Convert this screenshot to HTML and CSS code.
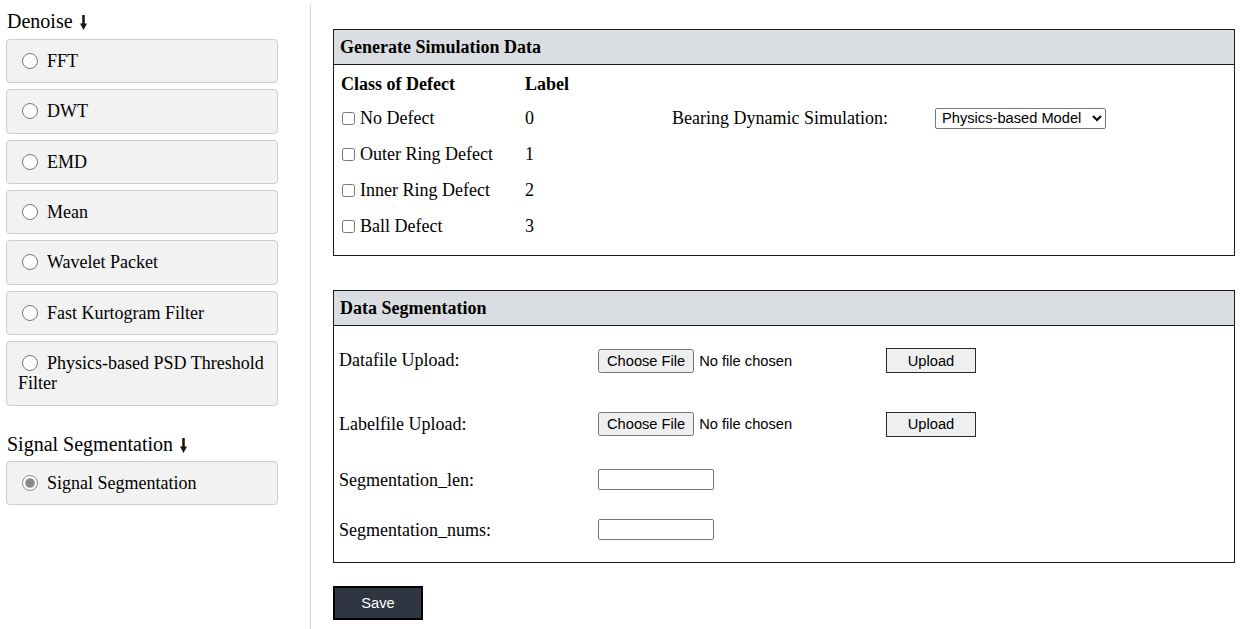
FILE: index.html
```html
<!DOCTYPE html>
<html>
<head>
<meta charset="utf-8">
<link rel="stylesheet" href="styles.css">
</head>
<body>
<div class="page">
  <aside class="sidebar">
    <h3 class="group-title">Denoise <svg class="down-arrow" width="7" height="15" viewBox="0 0 7 15"><rect x="2.25" y="0" width="2.5" height="10"/><polygon points="0,8.5 7,8.5 3.5,15"/></svg></h3>
    <label class="option"><input type="radio" name="method">FFT</label>
    <label class="option"><input type="radio" name="method">DWT</label>
    <label class="option"><input type="radio" name="method">EMD</label>
    <label class="option"><input type="radio" name="method">Mean</label>
    <label class="option"><input type="radio" name="method">Wavelet Packet</label>
    <label class="option"><input type="radio" name="method">Fast Kurtogram Filter</label>
    <label class="option"><input type="radio" name="method">Physics-based PSD Threshold Filter</label>
    <h3 class="group-title group-title--second">Signal Segmentation <svg class="down-arrow" width="7" height="15" viewBox="0 0 7 15"><rect x="2.25" y="0" width="2.5" height="10"/><polygon points="0,8.5 7,8.5 3.5,15"/></svg></h3>
    <label class="option"><input type="radio" name="seg" class="radio-checked" checked>Signal Segmentation</label>
  </aside>
  <main class="main">
    <section class="panel">
      <div class="panel-head">Generate Simulation Data</div>
      <div class="sim-grid">
        <div class="cell th">Class of Defect</div>
        <div class="cell th">Label</div>
        <div class="cell"></div>
        <div class="cell"></div>

        <label class="cell"><input type="checkbox" class="check">No Defect</label>
        <div class="cell">0</div>
        <div class="cell">Bearing Dynamic Simulation:</div>
        <div class="cell"><select class="select"><option>Physics-based Model</option></select></div>

        <label class="cell"><input type="checkbox" class="check">Outer Ring Defect</label>
        <div class="cell">1</div>
        <div class="cell"></div>
        <div class="cell"></div>

        <label class="cell"><input type="checkbox" class="check">Inner Ring Defect</label>
        <div class="cell">2</div>
        <div class="cell"></div>
        <div class="cell"></div>

        <label class="cell"><input type="checkbox" class="check">Ball Defect</label>
        <div class="cell">3</div>
        <div class="cell"></div>
        <div class="cell"></div>
      </div>
    </section>

    <section class="panel panel--seg">
      <div class="panel-head">Data Segmentation</div>
      <div class="seg-grid">
        <div class="cell">Datafile Upload:</div>
        <div class="cell"><input type="file" class="file"></div>
        <div class="cell"><button class="upload" type="button">Upload</button></div>

        <div class="cell">Labelfile Upload:</div>
        <div class="cell"><input type="file" class="file"></div>
        <div class="cell"><button class="upload" type="button">Upload</button></div>

        <div class="cell">Segmentation_len:</div>
        <div class="cell"><input type="text" class="text-input"></div>
        <div class="cell"></div>

        <div class="cell">Segmentation_nums:</div>
        <div class="cell"><input type="text" class="text-input"></div>
        <div class="cell"></div>
      </div>
    </section>

    <button class="save" type="button">Save</button>
  </main>
</div>
</body>
</html>
```

FILE: styles.css
```css
html, body {
  margin: 0;
  padding: 0;
  background: #fff;
}
body {
  font-family: "Liberation Serif", "Times New Roman", serif;
  font-size: 18px;
  color: #000;
}
.page {
  display: flex;
  align-items: stretch;
  padding-top: 5px;
  min-height: 624px;
  box-sizing: border-box;
}
.sidebar {
  width: 311px;
  flex: 0 0 311px;
  box-sizing: border-box;
  padding-left: 6px;
  border-right: 1px solid #cfcfcf;
  min-height: 624px;
}
.group-title {
  margin: 5px 0 6px 1px;
  font-size: 20px;
  font-weight: normal;
  line-height: 23px;
}
.group-title--second {
  margin-top: 27px;
  margin-bottom: 5px;
}
.down-arrow {
  fill: #1a1208;
  margin-left: 2px;
  vertical-align: -2px;
}
.option {
  display: block;
  width: 272px;
  box-sizing: border-box;
  padding: 11px 11px;
  line-height: 20.33px;
  border: 1px solid #cdcdcd;
  border-radius: 4px;
  background: #f2f2f2;
  margin-bottom: 6px;
}
.option input {
  margin: 0 9px 0 4px;
  width: 16px;
  height: 16px;
  vertical-align: -2px;
}
.option .radio-checked {
  accent-color: #8a8a8a;
}
.main {
  flex: 1;
  padding: 24px 13px 0 22px;
}
.panel {
  border: 1px solid #1a1a1a;
}
.panel--seg {
  margin-top: 34px;
}
.panel-head {
  background: #dadee2;
  border-bottom: 1px solid #1a1a1a;
  font-weight: bold;
  height: 35px;
  box-sizing: border-box;
  padding: 0 6px;
  display: flex;
  align-items: center;
}
.sim-grid {
  display: grid;
  grid-template-columns: 184px 147px 263px auto;
  grid-template-rows: 35px 36px 36px 36px 36px;
  padding: 0 0 11px 7px;
}
.cell {
  display: flex;
  align-items: center;
}
.th {
  font-weight: bold;
  padding-top: 4px;
}
.check {
  margin: 0 5px 0 1px;
  width: 13px;
  height: 13px;
}
.select {
  font-family: "Liberation Sans", Arial, sans-serif;
  font-size: 14.67px;
  height: 21px;
  width: 171px;
  padding: 0 0 0 2px;
  border: 1px solid #767676;
  border-radius: 2px;
  background: #fff;
  color: #000;
}
.seg-grid {
  display: grid;
  grid-template-columns: 259px 288px auto;
  grid-template-rows: 69px 58px 54px 46px;
  padding: 0 0 9px 5px;
}
.file {
  font-family: "Liberation Sans", Arial, sans-serif;
  font-size: 14.67px;
}
.file::file-selector-button {
  font-family: "Liberation Sans", Arial, sans-serif;
  font-size: 14.67px;
  padding: 2px 7px;
  margin-right: 5px;
}
.upload {
  width: 90px;
  height: 25px;
  font-family: "Liberation Sans", Arial, sans-serif;
  font-size: 14.67px;
  background: #efefef;
  border: 1px solid #2a2a2a;
  border-radius: 0;
  color: #000;
  padding: 0;
}
.text-input {
  width: 116px;
  height: 21px;
  box-sizing: border-box;
  border: 1px solid #767676;
  border-radius: 2px;
  margin: -1px 0 0 0;
}
.save {
  margin-top: 23px;
  width: 90px;
  height: 34px;
  background: #2f3541;
  border: 2px solid #000;
  color: #fff;
  font-family: "Liberation Sans", Arial, sans-serif;
  font-size: 14.67px;
  padding: 0;
}
```
